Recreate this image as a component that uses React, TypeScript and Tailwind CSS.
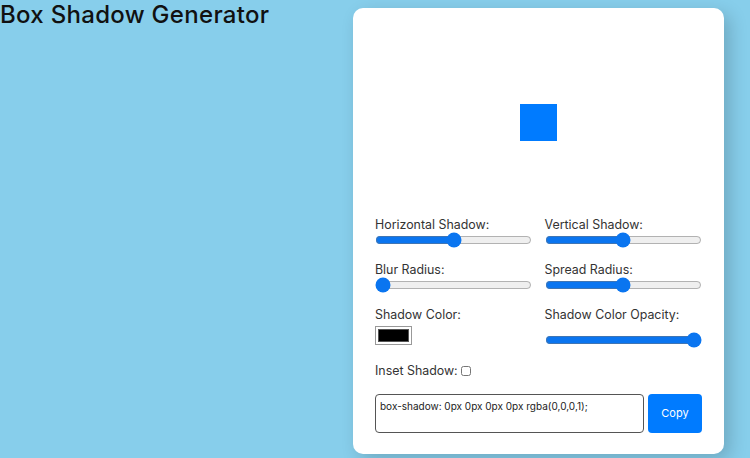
import React, { useState } from 'react';

const font = { fontFamily: 'Inter, "Noto Sans", sans-serif' };

interface SliderFieldProps {
  label: string;
  min: number;
  max: number;
  step?: number;
  value: number;
  onChange: (v: number) => void;
}

const SliderField: React.FC<SliderFieldProps> = ({ label, min, max, step = 1, value, onChange }) => (
  <div className="flex flex-col">
    <label className="text-[12.4px] leading-[20px] text-[#333]">{label}</label>
    <input
      type="range"
      min={min}
      max={max}
      step={step}
      value={value}
      onChange={(e) => onChange(Number(e.target.value))}
      className="w-[157px] h-[16px] mt-[-3px] mb-[3px] accent-[#0a75f0]"
    />
  </div>
);

export default function App() {
  const [h, setH] = useState(0);
  const [v, setV] = useState(0);
  const [blur, setBlur] = useState(0);
  const [spread, setSpread] = useState(0);
  const [color, setColor] = useState('#000000');
  const [opacity, setOpacity] = useState(1);
  const [inset, setInset] = useState(false);

  const r = parseInt(color.slice(1, 3), 16);
  const g = parseInt(color.slice(3, 5), 16);
  const b = parseInt(color.slice(5, 7), 16);
  const shadow = `${inset ? 'inset ' : ''}${h}px ${v}px ${blur}px ${spread}px rgba(${r},${g},${b},${opacity})`;

  return (
    <div className="min-h-screen bg-[#87ceeb] flex items-start" style={font}>
      <h1 className="w-[353px] shrink-0 text-[24px] leading-[30px] font-medium tracking-[0.3px] text-[#111] m-0">
        Box Shadow Generator
      </h1>

      {/* Generator card */}
      <div className="mt-[8px] w-[371px] bg-white rounded-[10px] px-[22px] pt-[22px] pb-[21px] shadow-[6px_6px_18px_rgba(0,0,0,0.18)]">
        <div className="h-[185px] flex items-center justify-center">
          <div className="w-[37px] h-[37px] bg-[#007bff]" style={{ boxShadow: shadow }} />
        </div>

        <div className="grid grid-cols-2 gap-x-[12px] gap-y-[9px]">
          <SliderField label="Horizontal Shadow:" min={-50} max={50} value={h} onChange={setH} />
          <SliderField label="Vertical Shadow:" min={-50} max={50} value={v} onChange={setV} />
          <SliderField label="Blur Radius:" min={0} max={100} value={blur} onChange={setBlur} />
          <SliderField label="Spread Radius:" min={-50} max={50} value={spread} onChange={setSpread} />
          <div className="flex flex-col">
            <label className="text-[12.4px] leading-[20px] text-[#333]">Shadow Color:</label>
            <input
              type="color"
              value={color}
              onChange={(e) => setColor(e.target.value)}
              className="w-[37px] h-[19px] mt-[1px] p-[2px] border border-[#999] bg-white cursor-pointer [&::-webkit-color-swatch-wrapper]:p-0 [&::-webkit-color-swatch]:border-[#555] [&::-webkit-color-swatch]:rounded-none"
            />
          </div>
          <div className="flex flex-col">
            <label className="text-[12.4px] leading-[20px] text-[#333]">Shadow Color Opacity:</label>
            <input
              type="range"
              min={0}
              max={1}
              step={0.01}
              value={opacity}
              onChange={(e) => setOpacity(Number(e.target.value))}
              className="w-[157px] h-[16px] mt-[7px] accent-[#0a75f0]"
            />
          </div>
        </div>

        <div className="mt-[13px] flex items-center text-[12.4px] leading-[20px] text-[#333]">
          <label>Inset Shadow:</label>
          <input
            type="checkbox"
            checked={inset}
            onChange={(e) => setInset(e.target.checked)}
            className="ml-[3px] w-[10px] h-[10px]"
          />
        </div>

        <div className="mt-[13px] flex gap-[4px]">
          <textarea
            readOnly
            value={`box-shadow: ${shadow};`}
            className="w-[269px] h-[39px] resize-none rounded-[4px] border border-[#555] px-[4px] py-[4px] text-[10px] leading-[14px] text-[#222] outline-none"
            style={font}
          />
          <button className="w-[54px] h-[39px] rounded-[4px] bg-[#007bff] text-white text-[11px]">
            Copy
          </button>
        </div>
      </div>
    </div>
  );
}
